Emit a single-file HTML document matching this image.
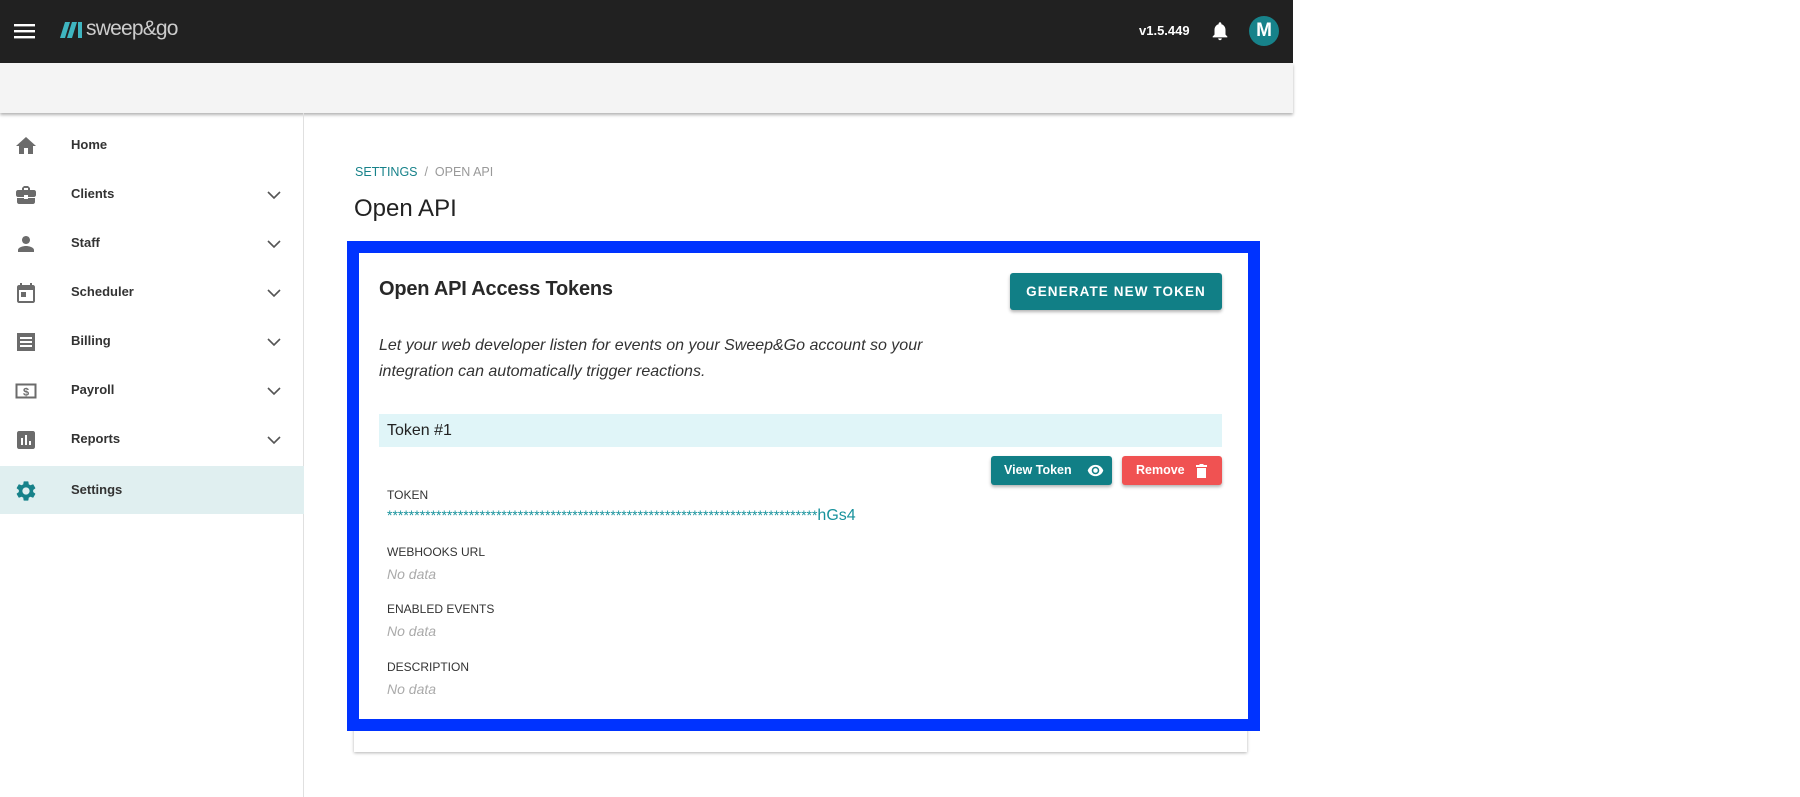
<!DOCTYPE html>
<html><head><meta charset="utf-8"><style>
*{margin:0;padding:0;box-sizing:border-box}
body{width:1800px;height:797px;background:#fff;font-family:"Liberation Sans",sans-serif;position:relative;overflow:hidden;color:#222}
.a{position:absolute}
.hdr{left:0;top:0;width:1293px;height:63px;background:#212121}
.bar{left:0;top:63px;width:1293px;height:50px;background:#f4f4f4;box-shadow:0 2px 3px rgba(0,0,0,.3)}
.side{left:0;top:113px;width:304px;height:684px;border-right:1px solid #e0e0e0}
.item{position:absolute;left:0;width:304px;height:48px;font-size:13px;font-weight:bold;color:#333}
.item span{position:absolute;left:71px;top:16px}
.item svg.ic{position:absolute;left:14px;top:13px}
.item svg.ch{position:absolute;left:266px;top:17px}
.lbl{font-size:12px;color:#333;left:387px}
.nd{font-size:14px;color:#aaa;font-style:italic;left:387px}
</style></head><body>
<div class="a hdr"></div>
<svg class="a" style="left:14px;top:22px" width="22" height="18" viewBox="0 0 22 18"><rect y="2" width="21" height="2.4" fill="#fff"/><rect y="8" width="21" height="2.4" fill="#fff"/><rect y="14" width="21" height="2.4" fill="#fff"/></svg>
<svg class="a" style="left:60px;top:20px" width="24" height="20" viewBox="0 0 24 20"><path d="M5 2h5l-5 16H0z" fill="#3fb5c0"/><path d="M12 2h5l-5 16H7z" fill="#3fb5c0"/><rect x="18" y="2" width="4" height="16" fill="#3fb5c0"/></svg>
<div class="a" style="left:86px;top:17px;font-size:21px;color:#ccc;letter-spacing:-0.8px">sweep&amp;go</div>
<div class="a" style="left:1139px;top:23px;font-size:13px;color:#fff;font-weight:bold">v1.5.449</div>
<svg class="a" style="left:1209px;top:19px" width="22" height="24" viewBox="0 0 24 24"><path fill="#fff" d="M12 22c1.1 0 2-.9 2-2h-4c0 1.1.9 2 2 2zm6-6v-5c0-3.07-1.64-5.640-4.5-6.32V4c0-.83-.67-1.5-1.5-1.5s-1.5.67-1.5 1.5v.68C7.63 5.36 6 7.920 6 11v5l-2 2v1h16v-1l-2-2z"/></svg>
<div class="a" style="left:1249px;top:16px;width:30px;height:30px;border-radius:50%;background:#17828a;color:#fff;font-weight:bold;font-size:19px;text-align:center;line-height:30px">M</div>
<div class="a bar"></div>
<div class="a side">
<div class="item" style="top:8px"><svg class="ic" width="24" height="24" viewBox="0 0 24 24"><path fill="#6b6b6b" d="M10 20v-6h4v6h5v-8h3L12 3 2 12h3v8z"/></svg><span>Home</span></div>
<div class="item" style="top:57px"><svg class="ic" width="24" height="24" viewBox="0 0 24 24"><path fill="#6b6b6b" d="M10 16v-1H3v4c0 1.1.9 2 2 2h14c1.1 0 2-.9 2-2v-4h-7v1h-4zm10-9h-4V5l-2-2h-4L8 5v2H4c-1.1 0-2 .9-2 2v3c0 1.1.9 2 2 2h6v-2h4v2h6c1.1 0 2-.9 2-2V9c0-1.1-.9-2-2-2zm-6 0h-4V5h4v2z"/></svg><span>Clients</span><svg class="ch" width="16" height="16" viewBox="0 0 16 16"><path d="M2 5l6 6 6-6" stroke="#555" stroke-width="1.6" fill="none"/></svg></div>
<div class="item" style="top:106px"><svg class="ic" width="24" height="24" viewBox="0 0 24 24"><path fill="#6b6b6b" d="M12 12c2.2 0 4-1.8 4-4s-1.8-4-4-4-4 1.8-4 4 1.8 4 4 4zm0 2c-2.7 0-8 1.3-8 4v2h16v-2c0-2.7-5.3-4-8-4z"/></svg><span>Staff</span><svg class="ch" width="16" height="16" viewBox="0 0 16 16"><path d="M2 5l6 6 6-6" stroke="#555" stroke-width="1.6" fill="none"/></svg></div>
<div class="item" style="top:155px"><svg class="ic" width="24" height="24" viewBox="0 0 24 24"><path fill="#6b6b6b" d="M19 4h-1V2h-2v2H8V2H6v2H5c-1.1 0-2 .9-2 2v14c0 1.1.9 2 2 2h14c1.1 0 2-.9 2-2V6c0-1.1-.9-2-2-2zm0 16H5V9h14v11zM7 11h5v5H7z"/></svg><span>Scheduler</span><svg class="ch" width="16" height="16" viewBox="0 0 16 16"><path d="M2 5l6 6 6-6" stroke="#555" stroke-width="1.6" fill="none"/></svg></div>
<div class="item" style="top:204px"><svg class="ic" width="24" height="24" viewBox="0 0 24 24"><path fill="#6b6b6b" d="M3 3h18v18H3zm3 4v2h12V7zm0 4v2h12v-2zm0 4v2h12v-2z" fill-rule="evenodd"/></svg><span>Billing</span><svg class="ch" width="16" height="16" viewBox="0 0 16 16"><path d="M2 5l6 6 6-6" stroke="#555" stroke-width="1.6" fill="none"/></svg></div>
<div class="item" style="top:253px"><svg class="ic" width="24" height="24" viewBox="0 0 24 24"><rect x="2.5" y="5.5" width="19" height="13" fill="none" stroke="#6b6b6b" stroke-width="2"/><text x="12" y="16.5" font-size="11" font-weight="bold" text-anchor="middle" fill="#6b6b6b" font-family="Liberation Sans">$</text></svg><span>Payroll</span><svg class="ch" width="16" height="16" viewBox="0 0 16 16"><path d="M2 5l6 6 6-6" stroke="#555" stroke-width="1.6" fill="none"/></svg></div>
<div class="item" style="top:302px"><svg class="ic" width="24" height="24" viewBox="0 0 24 24"><path fill="#6b6b6b" d="M19 3H5c-1.1 0-2 .9-2 2v14c0 1.1.9 2 2 2h14c1.1 0 2-.9 2-2V5c0-1.1-.9-2-2-2zM9 17H7v-7h2v7zm4 0h-2V7h2v10zm4 0h-2v-4h2v4z"/></svg><span>Reports</span><svg class="ch" width="16" height="16" viewBox="0 0 16 16"><path d="M2 5l6 6 6-6" stroke="#555" stroke-width="1.6" fill="none"/></svg></div>
<div class="item" style="top:353px;background:#e0eff0"><svg class="ic" width="24" height="24" viewBox="0 0 24 24"><path fill="#17828a" d="M19.14 12.94c.04-.3.06-.61.06-.94 0-.32-.02-.64-.07-.94l2.03-1.58a.49.49 0 00.12-.61l-1.92-3.32a.49.49 0 00-.59-.22l-2.39.96c-.5-.38-1.03-.7-1.620-.94l-.36-2.54a.48.48 0 00-.48-.41h-3.84c-.24 0-.43.17-.47.41l-.36 2.54c-.59.24-1.13.57-1.62.94l-2.39-.96a.49.49 0 00-.59.22L2.74 8.87c-.12.21-.08.47.12.61l2.03 1.58c-.05.3-.09.63-.09.94s.02.64.07.94l-2.03 1.58a.49.49 0 00-.12.61l1.92 3.32c.12.22.37.29.59.22l2.39-.96c.5.38 1.03.7 1.62.94l.36 2.54c.05.24.24.41.48.41h3.84c.24 0 .44-.17.47-.41l.36-2.54c.59-.24 1.13-.56 1.62-.94l2.39.96c.22.08.47 0 .59-.22l1.92-3.32c.12-.22.07-.47-.12-.61l-2.01-1.58zM12 15.6c-1.98 0-3.6-1.62-3.6-3.6s1.62-3.6 3.6-3.6 3.6 1.62 3.6 3.6-1.62 3.6-3.6 3.6z"/></svg><span>Settings</span></div>
</div>
<div class="a" style="left:355px;top:165px;font-size:12.5px;color:#999"><span style="color:#17828a">SETTINGS</span>&nbsp;&nbsp;/&nbsp;&nbsp;OPEN API</div>
<div class="a" style="left:354px;top:195px;font-size:24px;color:#222">Open API</div>
<div class="a" style="left:354px;top:650px;width:893px;height:102px;box-shadow:0 1px 3px rgba(0,0,0,.3);background:#fff"></div>
<div class="a" style="left:347px;top:241px;width:913px;height:490px;border:12px solid #0033ff;background:#fff"></div>
<div class="a" style="left:379px;top:278px;font-size:20px;font-weight:bold;color:#282828;letter-spacing:-0.2px">Open API Access Tokens</div>
<div class="a" style="left:1010px;top:273px;width:212px;height:37px;background:#117f86;border-radius:3px;box-shadow:0 2px 3px rgba(0,0,0,.3);color:#fff;font-size:13.5px;font-weight:bold;letter-spacing:1.1px;text-align:center;line-height:37px">GENERATE NEW TOKEN</div>
<div class="a" style="left:379px;top:333px;font-size:16px;font-style:italic;color:#333;line-height:26px">Let your web developer listen for events on your Sweep&amp;Go account so your<br>integration can automatically trigger reactions.</div>
<div class="a" style="left:379px;top:414px;width:843px;height:33px;background:#e0f5f8"></div>
<div class="a" style="left:387px;top:422px;font-size:16px;color:#222">Token #1</div>
<div class="a" style="left:991px;top:456px;width:121px;height:29px;background:#117f86;border-radius:3px;box-shadow:0 2px 3px rgba(0,0,0,.3);color:#fff;font-size:12.5px;font-weight:bold;line-height:29px;padding-left:13px">View Token
<svg style="position:absolute;left:96px;top:8px" width="17" height="13" viewBox="0 0 24 18"><path fill="#fff" d="M12 1C7 1 2.7 4.1 1 9c1.7 4.9 6 8 11 8s9.3-3.1 11-8c-1.7-4.9-6-8-11-8zm0 13.3c-2.9 0-5.3-2.4-5.3-5.3S9.1 3.7 12 3.7s5.3 2.4 5.3 5.3-2.4 5.3-5.3 5.3zm0-8.5c-1.8 0-3.2 1.4-3.2 3.2s1.4 3.2 3.2 3.2 3.2-1.4 3.2-3.2-1.4-3.2-3.2-3.2z"/></svg></div>
<div class="a" style="left:1122px;top:456px;width:100px;height:29px;background:#f05252;border-radius:3px;box-shadow:0 2px 3px rgba(0,0,0,.3);color:#fff;font-size:12.5px;font-weight:bold;line-height:29px;padding-left:14px">Remove
<svg style="position:absolute;left:74px;top:8px" width="11" height="14" viewBox="0 0 11 14"><rect x="0" y="1" width="11" height="2" fill="#fff"/><rect x="3.5" y="0" width="4" height="2" fill="#fff"/><rect x="1" y="4" width="9" height="10" fill="#fff"/></svg></div>
<div class="a lbl" style="top:488px">TOKEN</div>
<div class="a" style="left:387px;top:507px;font-size:14px;color:#17929c;white-space:nowrap">*******************************************************************************<span style="font-size:16px">hGs4</span></div>
<div class="a lbl" style="top:545px">WEBHOOKS URL</div>
<div class="a nd" style="top:566px">No data</div>
<div class="a lbl" style="top:602px">ENABLED EVENTS</div>
<div class="a nd" style="top:623px">No data</div>
<div class="a lbl" style="top:660px">DESCRIPTION</div>
<div class="a nd" style="top:681px">No data</div>
</body></html>
